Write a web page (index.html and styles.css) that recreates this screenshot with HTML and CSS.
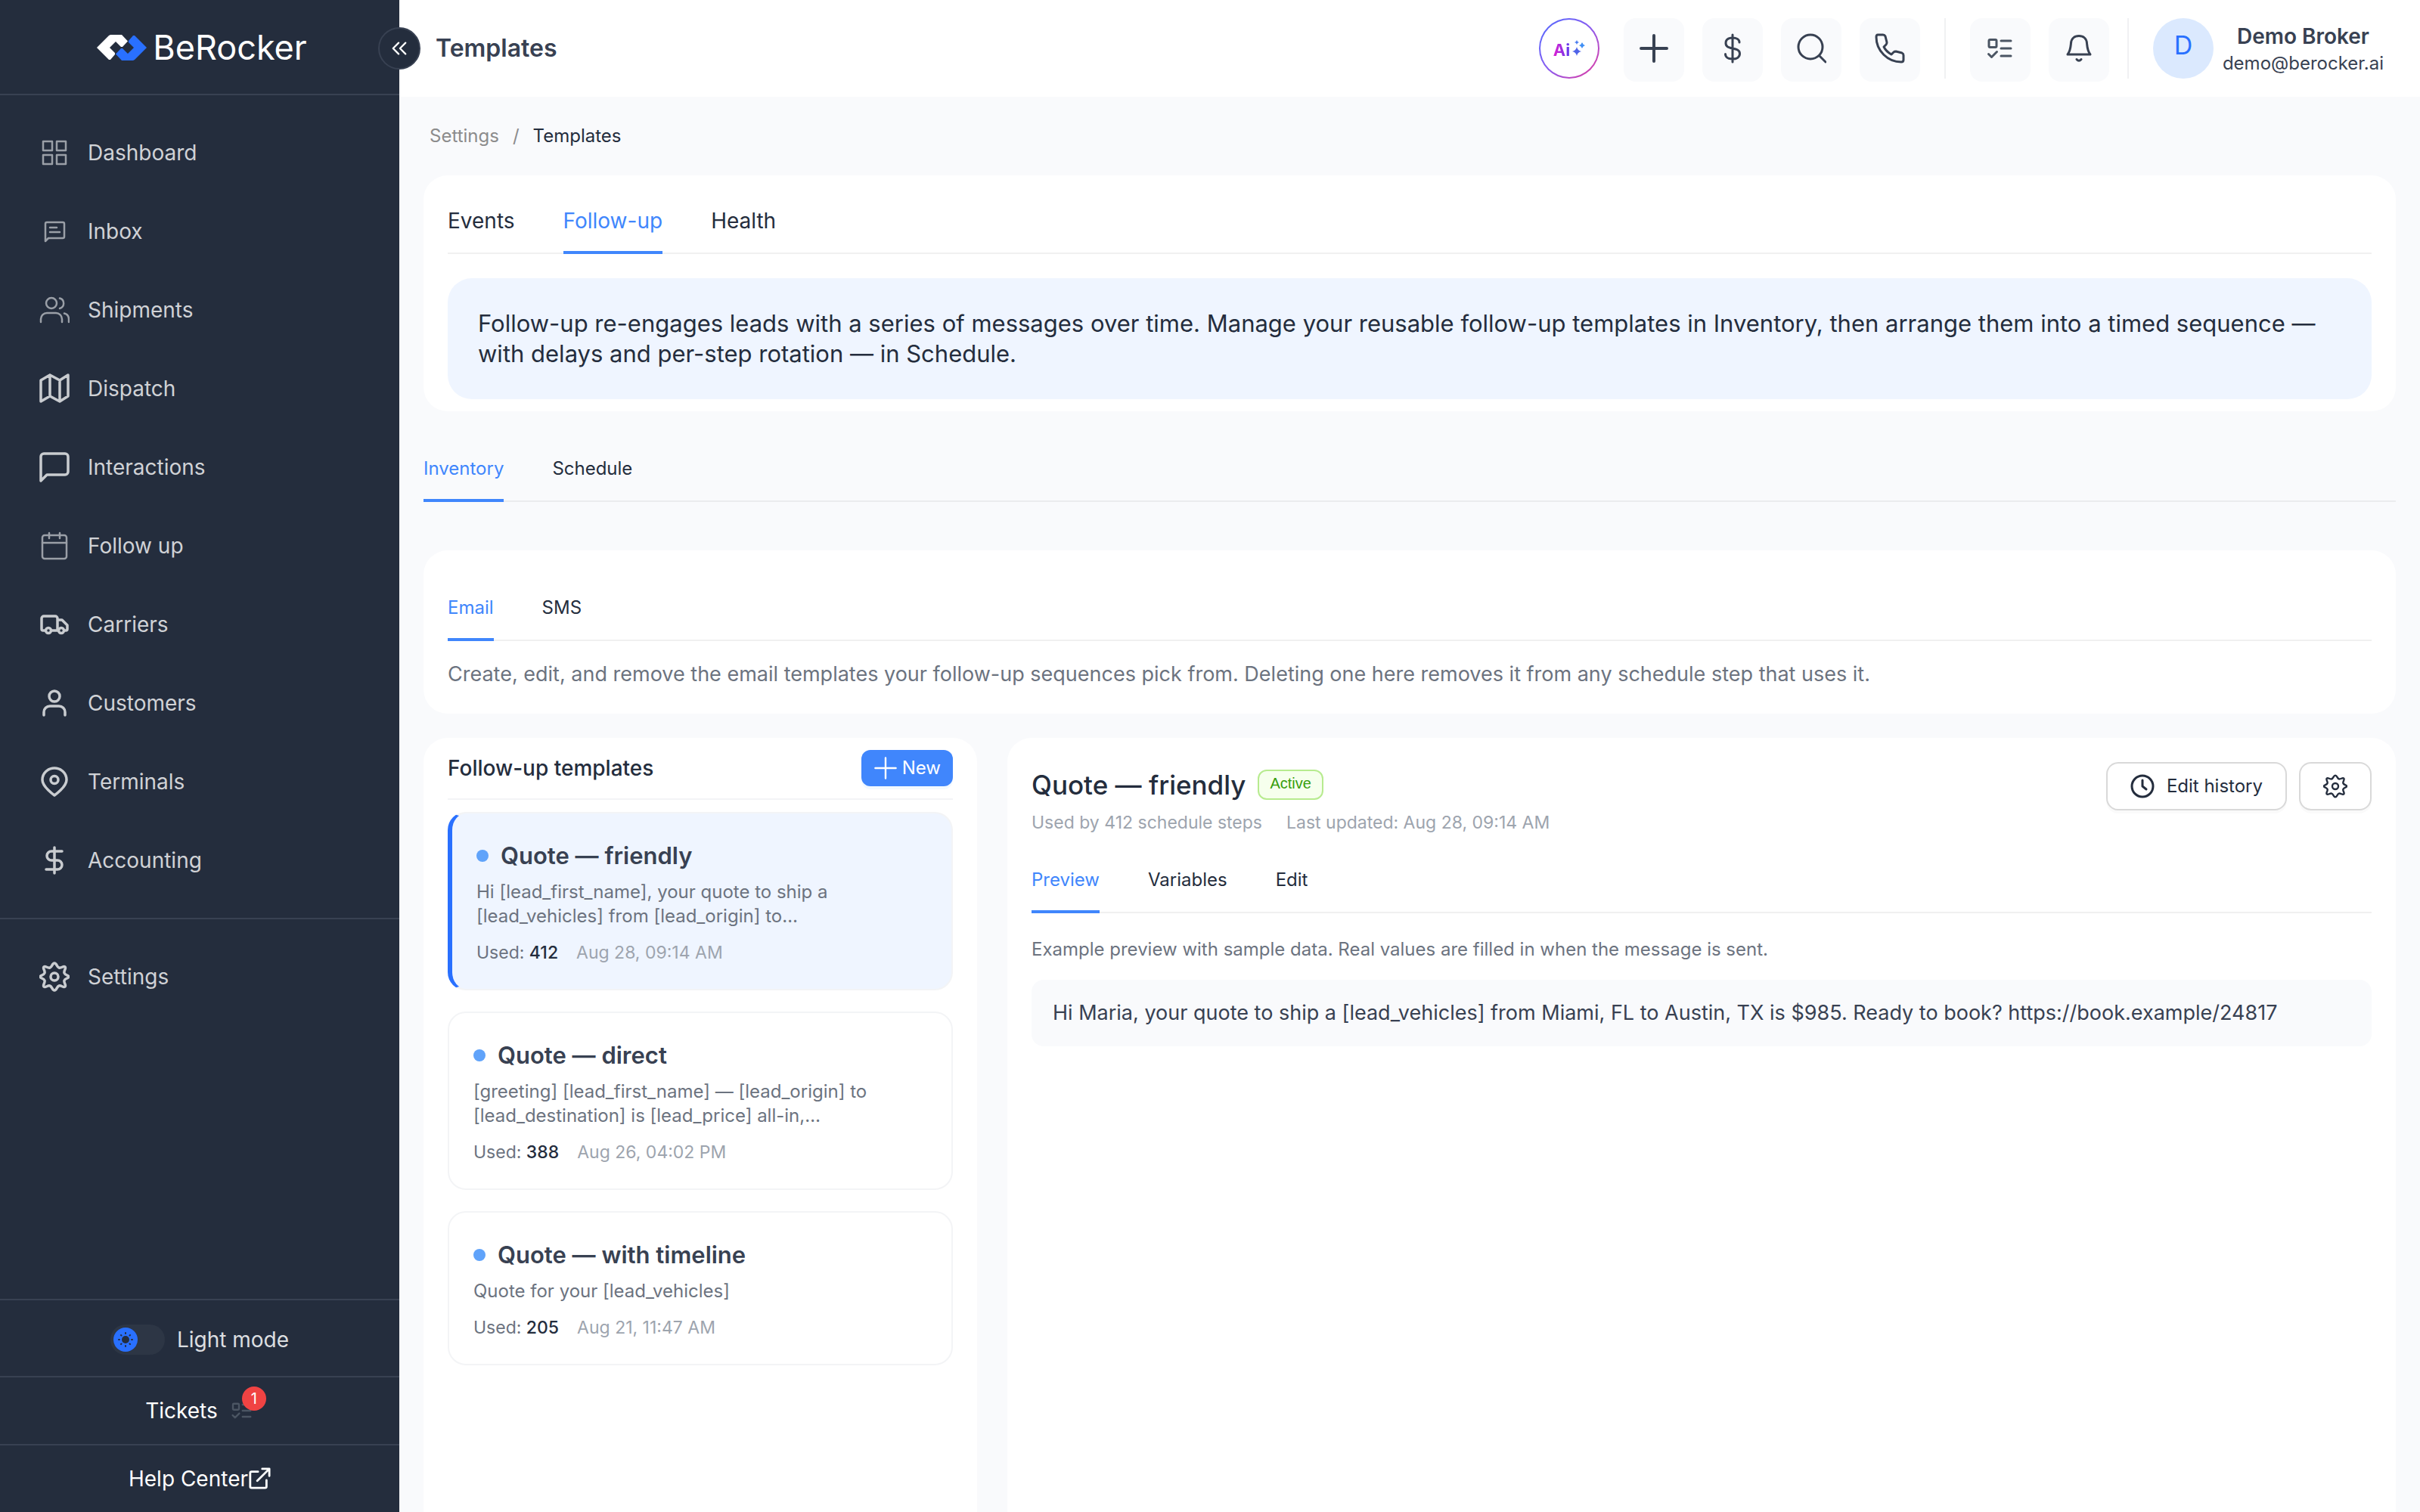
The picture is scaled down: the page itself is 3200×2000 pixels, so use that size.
FILE: index.html
```
<!DOCTYPE html>
<html lang="en">
<head>
    <meta charset="UTF-8">
    <meta name="viewport" content="width=device-width, initial-scale=1.0">
    <title>Templates - BeRocker</title>
    <link rel="stylesheet" href="styles.css">
</head>
<body>
    <!-- Shared icons -->
    <svg class="sprite" aria-hidden="true">
        <symbol id="i-plus" viewBox="0 0 40 40"><path d="M20 3v34M3 20h34"/></symbol>
        <symbol id="i-dollar" viewBox="0 0 40 40"><path d="M20 3v34M30 8H16a6 6 0 0 0 0 12h8a6 6 0 0 1 0 12H9"/></symbol>
        <symbol id="i-tasks" viewBox="0 0 40 40"><rect x="5" y="8.500" width="10" height="10" rx="1.500"/><path d="M21 10h13M21 20h13M21 30h13M4.500 27.500l4 4 7-7"/></symbol>
        <symbol id="i-gear" viewBox="0 0 24 24"><path d="M12.220 2h-.44a2 2 0 0 0-2 2v.18a2 2 0 0 1-1 1.730l-.43.25a2 2 0 0 1-2 0l-.15-.08a2 2 0 0 0-2.730.730l-.22.38a2 2 0 0 0 .730 2.730l.15.1a2 2 0 0 1 1 1.720v.51a2 2 0 0 1-1 1.740l-.15.09a2 2 0 0 0-.730 2.730l.22.38a2 2 0 0 0 2.730.730l.15-.08a2 2 0 0 1 2 0l.43.25a2 2 0 0 1 1 1.730V20a2 2 0 0 0 2 2h.44a2 2 0 0 0 2-2v-.18a2 2 0 0 1 1-1.730l.43-.25a2 2 0 0 1 2 0l.15.08a2 2 0 0 0 2.730-.730l.22-.39a2 2 0 0 0-.730-2.730l-.15-.08a2 2 0 0 1-1-1.740v-.5a2 2 0 0 1 1-1.740l.15-.09a2 2 0 0 0 .730-2.730l-.22-.38a2 2 0 0 0-2.730-.730l-.15.08a2 2 0 0 1-2 0l-.43-.25a2 2 0 0 1-1-1.730V4a2 2 0 0 0-2-2z"/><circle cx="12" cy="12" r="3"/></symbol>
        <symbol id="i-cog" viewBox="0 0 40 40"><path d="M20 2c3 0 3 5 6 6s6-3 8-1-2 5-1 8 6 3 6 5-5 2-6 5 3 6 1 8-5-2-8-1-3 6-6 6-3-5-6-6-6 3-8 1 2-5 1-8-6-3-6-5 5-2 6-5-3-6-1-8 5 2 8 1 3-6 6-6z"/><circle cx="20" cy="20" r="5"/></symbol>
    </svg>

    <aside class="sidebar">
        <div class="brand">
            <svg class="brand-mark" viewBox="0 0 66 34" aria-hidden="true">
                <path fill="#fff" d="M0 17 16 1l2-1h15l8 8.500-7 7.500h-2l-7-7-8 8 7 7v2l-6 7h-2z"/>
                <path fill="#2970ff" d="M66 17 50 33l-2 1H33l-8-8.500 7-7.500h2l7 7 8-8-7-7V8l6-7h2z"/>
            </svg>
            <span>BeRocker</span>
        </div>
        <nav class="nav">
            <a class="nav-item" href="#"><svg class="icon dim" viewBox="0 0 40 40"><rect x="5" y="5" width="12" height="12"/><rect x="23" y="5" width="12" height="12"/><rect x="5" y="23" width="12" height="12"/><rect x="23" y="23" width="12" height="12"/></svg>Dashboard</a>
            <a class="nav-item" href="#"><svg class="icon dim" viewBox="0 0 40 40"><path d="M8 33V10a2 2 0 0 1 2-2h21a2 2 0 0 1 2 2v17a2 2 0 0 1-2 2H12zM14 15h9M14 21h13"/></svg>Inbox</a>
            <a class="nav-item" href="#"><svg class="icon dim" viewBox="0 0 40 40"><circle cx="16" cy="11" r="7"/><path d="M2 36v-4a8 8 0 0 1 8-8h12a8 8 0 0 1 8 8v4M27 4.500a7 7 0 0 1 0 13.500M33 24.500a8 8 0 0 1 6 7.500v4"/></svg>Shipments</a>
            <a class="nav-item" href="#"><svg class="icon" viewBox="0 0 40 40"><path d="M2 9v28l12-7 13 7 11-7V2L27 9 14 2zM14 2v28M27 9v28"/></svg>Dispatch</a>
            <a class="nav-item" href="#"><svg class="icon" viewBox="0 0 40 40"><path d="M2 38V6a4 4 0 0 1 4-4h28a4 4 0 0 1 4 4v20a4 4 0 0 1-4 4H10z"/></svg>Interactions</a>
            <a class="nav-item" href="#"><svg class="icon dim" viewBox="0 0 40 40"><rect x="4" y="6" width="32" height="31" rx="3"/><path d="M4 16h32M13 3v7M27 3v7"/></svg>Follow up</a>
            <a class="nav-item" href="#"><svg class="icon" viewBox="0 0 40 40"><path d="M8 28H5a2 2 0 0 1-2-2V12a3 3 0 0 1 3-3h15a3 3 0 0 1 3 3v16H16M24 14h6l7 7v5a2 2 0 0 1-2 2h-1"/><circle cx="12" cy="28" r="3.500"/><circle cx="29" cy="28" r="3.500"/></svg>Carriers</a>
            <a class="nav-item" href="#"><svg class="icon" viewBox="0 0 40 40"><circle cx="20" cy="11" r="7"/><path d="M6 36v-4a8 8 0 0 1 8-8h12a8 8 0 0 1 8 8v4"/></svg>Customers</a>
            <a class="nav-item" href="#"><svg class="icon" viewBox="0 0 40 40"><path d="M36 17.500C36 27 20 38 20 38S4 27 4 17.500a16 15.500 0 0 1 32 0z"/><circle cx="20" cy="17.500" r="5"/></svg>Terminals</a>
            <a class="nav-item" href="#"><svg class="icon"><use href="#i-dollar"/></svg>Accounting</a>
        </nav>
        <nav class="nav nav-secondary">
            <a class="nav-item" href="#"><svg class="icon"><use href="#i-cog"/></svg>Settings</a>
        </nav>
        <div class="sidebar-footer">
            <label class="footer-row mode">
                <span class="switch">
                    <input type="checkbox">
                    <svg viewBox="0 0 32 32" aria-hidden="true"><circle cx="16" cy="16" r="5"/><path d="M16 7v1M16 24v1M7 16h1M24 16h1M10 10l.5.5M21.500 21.500l.5.5M10 22l.5-.5M21.500 10.500l.5-.5"/></svg>
                </span>
                Light mode
            </label>
            <a class="footer-row tickets" href="#">Tickets
                <span class="tickets-icon"><svg viewBox="0 0 40 40" aria-hidden="true"><use href="#i-tasks"/></svg><span class="count">1</span></span>
            </a>
            <a class="footer-row help" href="#">Help Center<svg viewBox="0 0 32 32" aria-hidden="true"><path d="M14 6H5a2 2 0 0 0-2 2v19a2 2 0 0 0 2 2h19a2 2 0 0 0 2-2v-9M20 2h10v10M30 2 13 19"/></svg></a>
        </div>
        <button class="collapse" aria-label="Collapse sidebar"><svg viewBox="0 0 24 24" aria-hidden="true"><path d="m11 4-8 8 8 8M21 4l-8 8 8 8"/></svg></button>
    </aside>

    <div class="page">
        <header class="topbar">
            <h1>Templates</h1>
            <div class="actions">
                <button class="ai-btn" aria-label="AI assistant"><span>Ai</span><svg viewBox="0 0 18 24" aria-hidden="true"><path fill="#4f63e8" d="M7 10q1 5 6 6-5 1-6 6-1-5-6-6 5-1 6-6z"/><path fill="#4a7cf0" d="M7 1q.5 2.500 3 3-2.500.5-3 3-.5-2.500-3-3 2.500-.5 3-3z"/><path fill="#3f8ff5" d="M14 4q1 3 4 4-3 1-4 4-1-3-4-4 3-1 4-4z"/></svg></button>
                <div class="group">
                    <button class="icon-btn" aria-label="Add"><svg class="bold"><use href="#i-plus"/></svg></button>
                    <button class="icon-btn" aria-label="Payments"><svg viewBox="0 0 40 40"><path d="M20 2v36M29 12c0-4-4-6-9-6s-9 2-9 7 4 6 9 7 9.500 2 9.500 7-4.500 7-9.500 7-9.500-2-9.500-6.500"/></svg></button>
                    <button class="icon-btn" aria-label="Search"><svg viewBox="0 0 40 40"><circle cx="19" cy="18" r="16"/><path d="m31 30 8 8"/></svg></button>
                    <button class="icon-btn" aria-label="Call"><svg viewBox="0 0 40 40"><path d="M4 2h7q2 0 3 2l2 8q0 2-1 3l-3 3q3 6 10 10l3-3q1-1 3-1l8 2q2 1 2 3v6q0 3-3 3C17 38 2 23 2 5q0-3 2-3z"/></svg></button>
                </div>
                <span class="sep"></span>
                <div class="group">
                    <button class="icon-btn tasks" aria-label="Tasks"><svg><use href="#i-tasks"/></svg></button>
                    <button class="icon-btn" aria-label="Notifications"><svg viewBox="0 0 40 40"><path d="M5 28c4-5 4-10 4.500-15C10 7 14 3.500 20 3.500S30 7 30.500 13C31 18 31 23 35 28zM17 34.500q3 3.500 6 0"/></svg></button>
                </div>
                <span class="sep sep-user"></span>
                <div class="user">
                    <span class="avatar">D</span>
                    <div class="user-text">
                        <strong>Demo Broker</strong>
                        <span>demo@berocker.ai</span>
                    </div>
                </div>
            </div>
        </header>

        <main>
            <nav class="breadcrumb" aria-label="Breadcrumb"><a href="#">Settings</a><span>/</span><span class="here">Templates</span></nav>

            <section class="card">
                <div class="tabs tabs-lg">
                    <button>Events</button>
                    <button class="active">Follow-up</button>
                    <button>Health</button>
                </div>
                <p class="info">Follow-up re-engages leads with a series of messages over time. Manage your reusable follow-up templates in Inventory, then arrange them into a timed sequence — with delays and per-step rotation — in Schedule.</p>
            </section>

            <div class="tabs tabs-page">
                <button class="active">Inventory</button>
                <button>Schedule</button>
            </div>

            <section class="card card-channel">
                <div class="tabs">
                    <button class="active">Email</button>
                    <button>SMS</button>
                </div>
                <p class="hint">Create, edit, and remove the email templates your follow-up sequences pick from. Deleting one here removes it from any schedule step that uses it.</p>
            </section>

            <div class="columns">
                <section class="panel list-panel">
                    <div class="list-head">
                        <h2>Follow-up templates</h2>
                        <button class="new-btn"><svg aria-hidden="true"><use href="#i-plus"/></svg>New</button>
                    </div>
                    <article class="item selected">
                        <h3>Quote — friendly</h3>
                        <p>Hi [lead_first_name], your quote to ship a [lead_vehicles] from [lead_origin] to…</p>
                        <div class="meta"><span>Used: <b>412</b></span><time>Aug 28, 09:14 AM</time></div>
                    </article>
                    <article class="item">
                        <h3>Quote — direct</h3>
                        <p>[greeting] [lead_first_name] — [lead_origin] to [lead_destination] is [lead_price] all-in,…</p>
                        <div class="meta"><span>Used: <b>388</b></span><time>Aug 26, 04:02 PM</time></div>
                    </article>
                    <article class="item">
                        <h3>Quote — with timeline</h3>
                        <p>Quote for your [lead_vehicles]</p>
                        <div class="meta"><span>Used: <b>205</b></span><time>Aug 21, 11:47 AM</time></div>
                    </article>
                </section>

                <section class="panel detail-panel">
                    <div class="detail-head">
                        <div>
                            <div class="detail-title"><h2>Quote — friendly</h2><span class="tag">Active</span></div>
                            <div class="detail-meta"><span>Used by 412 schedule steps</span><span>Last updated: Aug 28, 09:14 AM</span></div>
                        </div>
                        <div class="detail-actions">
                            <button class="btn"><svg viewBox="0 0 32 32" aria-hidden="true"><circle cx="16" cy="16" r="14"/><path d="M16 8v8l5 4"/></svg>Edit history</button>
                            <button class="btn" aria-label="Template settings"><svg aria-hidden="true"><use href="#i-cog"/></svg></button>
                        </div>
                    </div>
                    <div class="tabs">
                        <button class="active">Preview</button>
                        <button>Variables</button>
                        <button>Edit</button>
                    </div>
                    <p class="note">Example preview with sample data. Real values are filled in when the message is sent.</p>
                    <div class="message">Hi Maria, your quote to ship a [lead_vehicles] from Miami, FL to Austin, TX is $985. Ready to book? https://book.example/24817</div>
                </section>
            </div>
        </main>
    </div>
</body>
</html>
```
FILE: styles.css
```
:root {
  --sidebar: #242d3d;
  --sidebar-line: #384152;
  --primary: #4086fc;
  --blue: #2970ff;
  --bg: #f9fafc;
  --text: #242d3d;
  --text-2: #384152;
  --muted: #6c737f;
  --faint: #9da4ae;
  --line: #f0f0f0;
}
* { box-sizing: border-box; }
body {
  margin: 0;
  display: flex;
  height: 100vh;
  overflow: hidden;
  font-family: Inter, "Liberation Sans", sans-serif;
  font-size: 24px;
  line-height: 32px;
  background: var(--bg);
  color: var(--text);
}
h1, h2, h3, p { margin: 0; }
a { color: inherit; text-decoration: none; }
button {
  font: inherit;
  color: inherit;
  margin: 0;
  padding: 0;
  border: none;
  background: none;
  cursor: pointer;
}
svg {
  display: block;
  flex: none;
  fill: none;
  stroke: currentColor;
  stroke-width: 3;
  stroke-linecap: round;
  stroke-linejoin: round;
}
.sprite { position: absolute; width: 0; height: 0; }

/* Sidebar */
.sidebar {
  position: relative;
  z-index: 1;
  flex: none;
  width: 528px;
  display: flex;
  flex-direction: column;
  background: var(--sidebar);
  color: #d0d2d6;
  font-size: 28px;
}
.brand {
  display: flex;
  align-items: center;
  justify-content: center;
  gap: 8px;
  height: 126px;
  padding: 2px 0 0 6px;
  border-bottom: 2px solid var(--sidebar-line);
  color: #fff;
  font-size: 45px;
}
.brand-mark { width: 66px; height: 34px; stroke: none; }
.nav { padding: 24px 0; }
.nav-secondary { border-top: 2px solid var(--sidebar-line); }
.nav-item {
  display: flex;
  align-items: center;
  gap: 24px;
  height: 104px;
  padding-left: 52px;
}
.icon { width: 40px; height: 40px; color: #c9ccd0; stroke-width: 3.5; }
.icon.dim { color: #9a9fa7; stroke-width: 2.5; }
.sidebar-footer { margin-top: auto; }
.footer-row {
  display: flex;
  align-items: center;
  justify-content: center;
  height: 90px;
  border-top: 2px solid var(--sidebar-line);
  color: #fff;
}
.mode { height: 102px; padding-top: 4px; gap: 16px; color: #dcdee0; }
.switch { display: grid; align-items: center; }
.switch input {
  grid-area: 1 / 1;
  appearance: none;
  width: 72px;
  height: 40px;
  margin: 0;
  border-radius: 20px;
  background: #2d3645;
}
.switch svg {
  grid-area: 1 / 1;
  width: 32px;
  height: 32px;
  margin-left: 4px;
  border-radius: 50%;
  background: var(--blue);
  color: var(--sidebar);
  stroke-width: 2;
}
.switch circle { fill: currentColor; stroke: none; }
.tickets { gap: 16px; }
.tickets-icon { position: relative; color: #4b5563; }
.tickets-icon svg { width: 32px; height: 32px; }
.count {
  position: absolute;
  top: -16px;
  left: 16px;
  width: 32px;
  height: 32px;
  border-radius: 50%;
  background: #f04343;
  color: #fff;
  font-size: 20px;
  text-align: center;
}
.help svg { width: 30px; height: 30px; }
.collapse {
  position: absolute;
  top: 36px;
  right: -28px;
  display: grid;
  place-items: center;
  width: 56px;
  height: 56px;
  border: 2px solid var(--sidebar-line);
  border-radius: 50%;
  background: var(--sidebar);
  color: #fff;
}
.collapse svg { width: 22px; height: 22px; stroke-width: 2.5; }

/* Top bar */
.page { flex: 1; min-width: 0; }
.topbar {
  display: flex;
  align-items: center;
  justify-content: space-between;
  height: 128px;
  padding: 0 48px;
  background: #fff;
  color: var(--text-2);
}
.topbar h1 { font-size: 32px; font-weight: 600; }
.actions, .group, .user { display: flex; align-items: center; }
.group { gap: 24px; margin-top: 4px; }
.ai-btn {
  display: flex;
  align-items: center;
  justify-content: center;
  gap: 2px;
  width: 80px;
  height: 80px;
  margin-right: 32px;
  border: 2px solid transparent;
  border-radius: 50%;
  background: linear-gradient(#fff, #fff) padding-box, linear-gradient(135deg, #4f6bff, #8a5cf0 50%, #e8389b) border-box;
}
.ai-btn span {
  padding-top: 4px;
  font-size: 22px;
  font-weight: 700;
  background: linear-gradient(90deg, #e01fd0, #5a3bf0);
  background-clip: text;
  color: transparent;
}
.ai-btn svg { width: 18px; height: 24px; stroke: none; }
.icon-btn {
  display: grid;
  place-items: center;
  width: 80px;
  height: 84px;
  padding-bottom: 4px;
  border-radius: 16px;
  background: var(--bg);
}
.icon-btn svg { width: 40px; height: 40px; }
.icon-btn svg.bold { stroke-width: 4; }
.tasks { color: #4b5563; }
.sep { width: 2px; height: 80px; margin: 0 32px; background: #f0f1f3; }
.sep-user { margin-left: 24px; }
.user { gap: 12px; }
.avatar {
  width: 80px;
  height: 80px;
  border-radius: 50%;
  background: #dbe9fe;
  color: var(--blue);
  font-size: 34px;
  line-height: 72px;
  text-align: center;
}
.user-text { display: flex; flex-direction: column; align-items: center; }
.user-text strong { font-size: 28px; font-weight: 600; line-height: 40px; }

/* Content */
main { padding: 0 32px; }
.breadcrumb {
  display: flex;
  align-items: center;
  gap: 18px;
  height: 104px;
  padding-left: 8px;
  color: #8c8c8c;
}
.breadcrumb .here { color: var(--text); }
.card {
  padding: 24px 32px 16px;
  border-radius: 32px;
  background: #fff;
}
.tabs {
  display: flex;
  gap: 64px;
  border-bottom: 2px solid var(--line);
}
.tabs button {
  margin-bottom: -2px;
  padding: 14px 0 18px;
  border-bottom: 4px solid transparent;
  line-height: 44px;
}
.tabs .active { color: var(--primary); border-color: var(--primary); }
.tabs-lg { font-size: 28px; }
.tabs-page { margin: 40px 0 64px; border-color: #ebecee; }
.info {
  margin-top: 32px;
  padding: 40px;
  border-radius: 32px;
  background: #eff5ff;
  font-size: 31px;
  line-height: 40px;
}
.card-channel { padding: 40px 32px 32px; }
.hint {
  margin-top: 24px;
  color: var(--muted);
  font-size: 27px;
  line-height: 40px;
}
.columns {
  display: grid;
  grid-template-columns: 732px 1fr;
  gap: 40px;
  margin-top: 32px;
}
.panel {
  min-height: 1100px;
  padding: 0 32px;
  border-radius: 32px;
  background: #fff;
}

/* Template list */
.list-head {
  display: flex;
  align-items: center;
  justify-content: space-between;
  height: 82px;
  margin-bottom: 16px;
  border-bottom: 2px solid #f3f4f6;
}
.list-head h2 { font-size: 28px; font-weight: 500; }
.new-btn {
  display: flex;
  align-items: center;
  gap: 6px;
  height: 48px;
  padding: 0 16px;
  border-radius: 12px;
  background: var(--primary);
  box-shadow: 0 4px 0 rgba(5, 145, 255, 0.05);
  color: #fff;
}
.new-btn svg { width: 32px; height: 32px; }
.item {
  margin-bottom: 28px;
  padding: 32px;
  border: 2px solid #f3f4f6;
  border-radius: 24px;
}
.item.selected {
  border-left: 6px solid var(--blue);
  background: #eff5ff;
}
.item h3 {
  display: flex;
  align-items: center;
  gap: 16px;
  color: var(--text-2);
  font-size: 31px;
  font-weight: 600;
  line-height: 48px;
}
.item h3::before {
  content: "";
  width: 16px;
  height: 16px;
  border-radius: 50%;
  background: #60a3fa;
}
.item p { margin: 8px 0 16px; color: var(--muted); }
.meta { display: flex; gap: 24px; color: var(--muted); font-size: 23px; }
.meta b { color: var(--text); font-weight: 500; }
.meta time { color: var(--faint); }

/* Template detail */
.detail-panel { padding: 32px; }
.detail-head {
  display: flex;
  align-items: flex-start;
  justify-content: space-between;
  margin-bottom: 20px;
}
.detail-title { display: flex; align-items: center; gap: 16px; }
.detail-title h2 { font-size: 35px; font-weight: 500; line-height: 60px; }
.tag {
  height: 40px;
  padding: 0 14px;
  border: 2px solid #b7eb8f;
  border-radius: 12px;
  background: #f6ffed;
  color: #389e0d;
  font: 20px/32px "Liberation Sans", sans-serif;
}
.detail-meta {
  display: flex;
  gap: 32px;
  color: var(--faint);
  font-size: 23px;
  line-height: 40px;
}
.detail-actions { display: flex; gap: 16px; }
.btn {
  display: flex;
  align-items: center;
  gap: 16px;
  height: 64px;
  padding: 0 30px;
  border: 2px solid #d9d9d9;
  border-radius: 16px;
  background: #fff;
  box-shadow: 0 4px 0 rgba(0, 0, 0, 0.02);
}
.btn svg { width: 32px; height: 32px; }
.note { margin: 32px 0 24px; color: var(--muted); }
.message {
  padding: 24px 28px;
  border-radius: 16px;
  background: var(--bg);
  color: var(--text-2);
  font-size: 27px;
  line-height: 40px;
}
```
